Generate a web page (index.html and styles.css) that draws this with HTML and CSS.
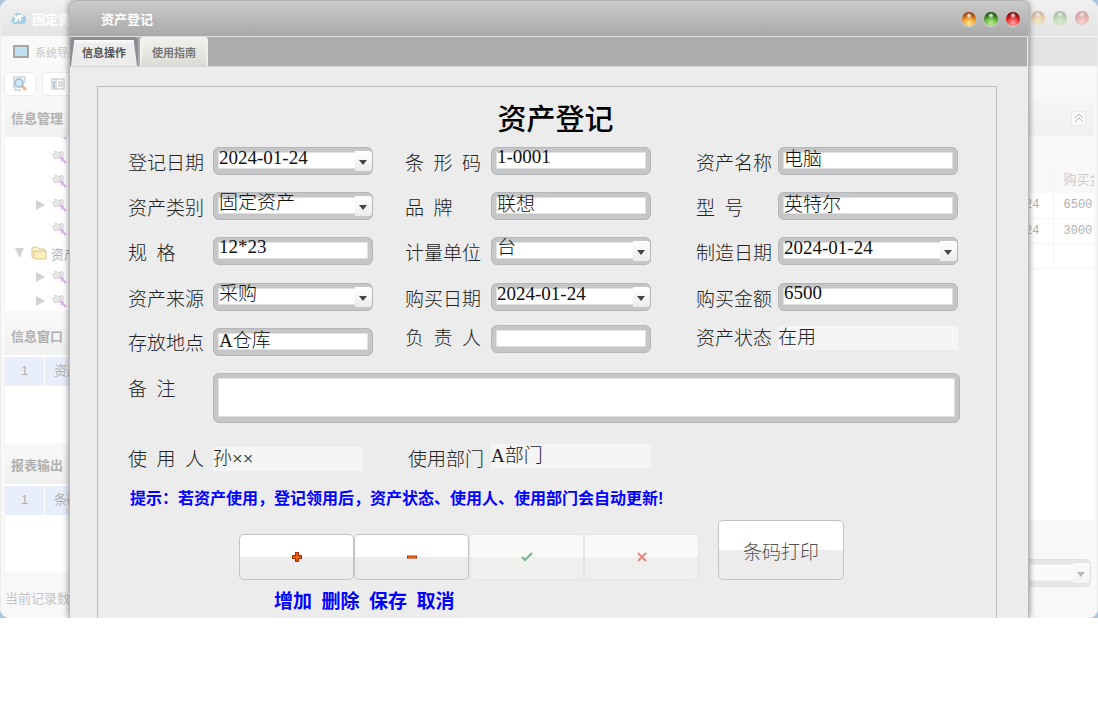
FILE: index.html
```html
<!DOCTYPE html>
<html lang="zh-CN">
<head>
    <meta charset="UTF-8">
    <meta name="viewport" content="width=device-width, initial-scale=1.0">
    <title>资产登记</title>
    <link rel="stylesheet" href="styles.css">
</head>
<body>
    <svg class="symbols" aria-hidden="true">
        <symbol id="tool" viewBox="0 0 16 16">
            <path d="M1 6l3-4 3 2 3-2 2 3-2 3-3-1-2 3-3-1z" fill="#e9e9e9" stroke="#c4c4c4" stroke-dasharray="2 1"/>
            <path d="M5 10l3-4 4 3-3 4" fill="#f4f4f4" stroke="#d0d0d0"/>
            <path d="M8 8l6 6" stroke="#d9b0ee" stroke-width="2"/>
        </symbol>
    </svg>

    <div class="desktop">
        <!-- Main window -->
        <div class="app">
            <header class="app-title">
                <svg width="16" height="14" viewBox="0 0 16 14"><path d="M4 13a4 4 0 0 1-1-7 5 5 0 0 1 9-2 4.500 4.500 0 0 1 1 9z" fill="#a9d0e6"/><path d="M4 4l3 4 2-4M7 8l-2 3M13 5h-3v5" stroke="#fff" stroke-width="2" fill="none"/></svg>
                <span>固定资</span>
                <div class="lights">
                    <i class="light orange"></i><i class="light green"></i><i class="light red"></i>
                </div>
            </header>
            <div class="app-tabs">
                <div class="app-tab">
                    <svg width="16" height="14" viewBox="0 0 16 14"><rect x="1" y="1" width="14" height="11" fill="#bfe0ef" stroke="#a5a5a5" stroke-width="2"/></svg>
                    <span>系统导航</span>
                </div>
            </div>
            <div class="toolbar">
                <button class="tool" aria-label="查找">
                    <svg width="16" height="16" viewBox="0 0 16 16"><path d="M2 1h11v6M2 1v11h2M2 14h7" stroke="#bbb" fill="none"/><circle cx="7" cy="7" r="4" fill="#cdeafa" stroke="#a9c3d6" stroke-width="2"/><path d="M10 10l4 4" stroke="#eab79c" stroke-width="3"/></svg>
                </button>
                <button class="tool" aria-label="列表">
                    <svg width="14" height="12" viewBox="0 0 14 12"><rect x="1" y="1" width="12" height="10" fill="#fff" stroke="#bbb"/><path d="M3 3v7" stroke="#a9cbe6" stroke-width="2"/><path d="M5 1v10" stroke="#bbb"/><path d="M7 4h5M7 6h5M7 8h5" stroke="#bbb"/></svg>
                </button>
            </div>
            <div class="workspace">
                <aside class="sidebar">
                    <h2>信息管理</h2>
                    <div class="tree-box">
                        <ul class="tree">
                            <li class="leaf"><svg width="16" height="16"><use href="#tool"/></svg></li>
                            <li class="leaf"><svg width="16" height="16"><use href="#tool"/></svg></li>
                            <li class="leaf"><svg width="16" height="16"><use href="#tool"/></svg></li>
                            <li class="leaf closed"><svg width="16" height="16"><use href="#tool"/></svg></li>
                            <li class="leaf"><svg width="16" height="16"><use href="#tool"/></svg></li>
                            <li class="folder"><svg width="16" height="14" viewBox="0 0 16 14"><path d="M1 11V3q0-2 2-2h3l2 2h5q1 0 1 2v7H2z" fill="#fff4cc" stroke="#d9c48f"/><path d="M3 5h12v7q0 1-1 1H4q-1 0-1-1z" fill="#fff0bb" stroke="#d9c48f"/></svg>资产</li>
                            <li class="leaf closed"><svg width="16" height="16"><use href="#tool"/></svg></li>
                            <li class="leaf closed"><svg width="16" height="16"><use href="#tool"/></svg></li>
                        </ul>
                    </div>
                    <h2>信息窗口</h2>
                    <div class="list">
                        <div class="list-row"><span>1</span><span>资产</span></div>
                    </div>
                    <h2>报表输出</h2>
                    <div class="list">
                        <div class="list-row"><span>1</span><span>条码</span></div>
                    </div>
                    <p class="status">当前记录数</p>
                </aside>
                <main class="records">
                    <div class="records-head">
                        <button class="collapse" aria-label="收起">
                            <svg width="10" height="10" viewBox="0 0 10 10"><path d="M1 5l4-4 4 4M1 9l4-4 4 4" stroke="#b5b5b5" fill="none"/></svg>
                        </button>
                    </div>
                    <div class="records-body">
                        <table>
                            <thead><tr><th></th><th>购买金额</th></tr></thead>
                            <tbody>
                                <tr><td>2024-01-24</td><td>6500</td></tr>
                                <tr><td>2024-01-24</td><td>3000</td></tr>
                                <tr><td></td><td></td></tr>
                            </tbody>
                        </table>
                    </div>
                    <div class="records-foot">
                        <span class="combo"><select aria-label="筛选"><option></option></select></span>
                    </div>
                </main>
            </div>
        </div>

        <!-- Registration dialog -->
        <div class="dialog" role="dialog" aria-labelledby="dialog-title">
            <header class="dialog-title">
                <span id="dialog-title">资产登记</span>
                <div class="lights">
                    <button class="light orange" aria-label="最小化"></button>
                    <button class="light green" aria-label="最大化"></button>
                    <button class="light red" aria-label="关闭"></button>
                </div>
            </header>
            <nav class="tabs">
                <button class="tab active"><span>信息操作</span></button>
                <button class="tab"><span>使用指南</span></button>
            </nav>
            <form class="panel">
                <h1>资产登记</h1>
                <div class="fields">
                    <label for="reg-date">登记日期</label>
                    <span class="combo"><select id="reg-date"><option>2024-01-24</option></select></span>
                    <label for="barcode">条&ensp;形&ensp;码</label>
                    <input type="text" id="barcode" value="1-0001">
                    <label for="name">资产名称</label>
                    <input type="text" id="name" value="电脑">

                    <label for="category">资产类别</label>
                    <span class="combo"><select id="category"><option>固定资产</option></select></span>
                    <label for="brand">品&ensp;牌</label>
                    <input type="text" id="brand" value="联想">
                    <label for="model">型&ensp;号</label>
                    <input type="text" id="model" value="英特尔">

                    <label for="spec">规&ensp;格</label>
                    <input type="text" id="spec" value="12*23">
                    <label for="unit">计量单位</label>
                    <span class="combo"><select id="unit"><option>台</option></select></span>
                    <label for="made">制造日期</label>
                    <span class="combo"><select id="made"><option>2024-01-24</option></select></span>

                    <label for="source">资产来源</label>
                    <span class="combo"><select id="source"><option>采购</option></select></span>
                    <label for="bought">购买日期</label>
                    <span class="combo"><select id="bought"><option>2024-01-24</option></select></span>
                    <label for="price">购买金额</label>
                    <input type="text" id="price" value="6500">

                    <label for="place" class="low">存放地点</label>
                    <input type="text" id="place" class="low" value="A仓库">
                    <label for="owner" class="flat">负&ensp;责&ensp;人</label>
                    <input type="text" id="owner">
                    <label for="state" class="flat">资产状态</label>
                    <output id="state">在用</output>
                </div>

                <div class="remark">
                    <label for="remark">备&ensp;注</label>
                    <textarea id="remark"></textarea>
                </div>

                <div class="fields usage">
                    <label for="user">使&ensp;用&ensp;人</label>
                    <output id="user">孙××</output>
                    <label for="dept">使用部门</label>
                    <output id="dept">A部门</output>
                </div>

                <p class="tip">提示：若资产使用，登记领用后，资产状态、使用人、使用部门会自动更新!</p>

                <div class="actions">
                    <div class="record-nav">
                        <button type="button" aria-label="增加"><svg width="10" height="10" viewBox="0 0 10 10"><path d="M5 0v10M0 5h10" stroke="#b92a00" stroke-width="4"/><path d="M5 1v8M1 5h8" stroke="#ff8a1c" stroke-width="1"/></svg></button>
                        <button type="button" aria-label="删除"><svg width="10" height="10" viewBox="0 0 10 10"><path d="M0 5h10" stroke="#b92a00" stroke-width="3"/><path d="M1 5h8" stroke="#ff8a1c" stroke-width="1"/></svg></button>
                        <button type="button" aria-label="保存" disabled><svg width="12" height="10" viewBox="0 0 12 10"><path d="M1 5l3 3 7-7" stroke="#78b48c" stroke-width="2" fill="none"/></svg></button>
                        <button type="button" aria-label="取消" disabled><svg width="10" height="10" viewBox="0 0 10 10"><path d="M1 1l8 8M9 1l-8 8" stroke="#e48a80" stroke-width="2"/></svg></button>
                    </div>
                    <button type="button" class="print">条码打印</button>
                </div>
                <p class="captions">增加&ensp;删除&ensp;保存&ensp;取消</p>
            </form>
        </div>
    </div>
</body>
</html>
```
FILE: styles.css
```css
/* General Styles */
* {
    box-sizing: border-box;
}
body {
    margin: 0;
    background: #fff;
    font-family: "Liberation Sans", "Noto Sans CJK SC", sans-serif;
    font-size: 13px;
}
h1, h2, p, ul {
    margin: 0;
    padding: 0;
}
button {
    padding: 0;
    cursor: pointer;
}
svg {
    display: block;
    flex: none;
}
.symbols {
    position: absolute;
    width: 0;
    height: 0;
}
.desktop {
    position: relative;
    overflow: hidden;
    background: #aec3dc;
}

/* Main window */
.app {
    border: 1px solid #ececec;
    border-width: 0 1px 0 1px;
    border-radius: 9px;
    overflow: hidden;
    background: #f8f8f8;
    color: #b0b0b0;
}
.app-title {
    display: flex;
    align-items: center;
    gap: 6px;
    height: 37px;
    padding: 0 8px 0 9px;
    background: linear-gradient(#f0f0f0, #e4e4e4);
    border-bottom: 1px solid #f6f6f6;
    color: #fff;
    font-weight: bold;
}
.app-tabs {
    height: 29px;
    background: #e4e4e4;
}
.app-tab {
    display: flex;
    align-items: center;
    gap: 6px;
    width: 120px;
    height: 29px;
    padding-left: 12px;
    background: #f9f9f7;
    color: #c8c8c8;
    font-size: 11px;
}
.toolbar {
    display: flex;
    gap: 6px;
    height: 34px;
    padding: 6px 3px;
}
.tool {
    display: flex;
    align-items: center;
    justify-content: center;
    width: 32px;
    height: 24px;
    border: 1px solid #ececec;
    border-radius: 5px;
    background: #fff;
}
.workspace {
    display: flex;
}
.sidebar {
    width: 200px;
    padding: 0 4px;
}
.sidebar h2 {
    height: 37px;
    padding-left: 6px;
    background: linear-gradient(#f8f8f8, #f0f0f0);
    font-size: 13px;
    line-height: 37px;
}
.tree-box {
    height: 174px;
    margin-bottom: 7px;
    overflow: hidden;
    background: #fff;
}
.tree {
    margin-top: -16px;
    list-style: none;
}
.tree li {
    display: flex;
    align-items: center;
    gap: 4px;
    height: 24px;
}
.leaf::before,
.folder::before {
    content: "";
    width: 9px;
    height: 10px;
}
.leaf {
    padding-left: 31px;
}
.leaf svg {
    margin-left: 3px;
}
.closed::before {
    background: #d2d2d2;
    clip-path: polygon(0 0, 100% 50%, 0 100%);
}
.folder {
    padding-left: 10px;
}
.folder svg {
    margin-left: 3px;
}
.folder::before {
    background: #d2d2d2;
    clip-path: polygon(0 0, 100% 0, 50% 100%);
}
.list {
    height: 88px;
    margin-bottom: 4px;
    padding-top: 2px;
    background: #fff;
}
.list-row {
    display: flex;
    height: 29px;
    background: #e9effa;
    line-height: 28px;
}
.list-row span:first-child {
    width: 40px;
    border-right: 1px solid #fff;
    text-align: center;
}
.list-row span + span {
    padding-left: 9px;
}
.status {
    height: 42px;
    padding-top: 14px;
    color: #c4c4c4;
    line-height: 18px;
}
.records {
    flex: 1;
    min-width: 0;
    padding-right: 3px;
}
.records-head {
    display: flex;
    align-items: center;
    justify-content: flex-end;
    height: 36px;
    padding-right: 8px;
    background: linear-gradient(#f6f6f6, #f0f0f0);
}
.collapse {
    display: flex;
    align-items: center;
    justify-content: center;
    width: 15px;
    height: 15px;
    border: 1px solid #eaeaea;
    border-radius: 2px;
    background: #fcfcfc;
}
.records-body {
    height: 384px;
    padding-top: 28px;
    background: linear-gradient(#f9f9f9 28px, #fff 28px);
}
.records-body table {
    width: 100%;
    border-collapse: collapse;
    table-layout: fixed;
    font: 12px "Liberation Mono", "Noto Sans CJK SC", monospace;
}
.records-body th {
    height: 29px;
    background: #f8f8f8;
    color: #ccc;
    font-size: 13px;
    font-weight: normal;
}
.records-body td {
    height: 25px;
    padding: 0 13px 0 0;
    border-bottom: 1px solid #f5f5f5;
    text-align: right;
}
.records-body th:last-child,
.records-body td:last-child {
    width: 41px;
    padding: 0 0 0 10px;
    border-left: 1px solid #f5f5f5;
    overflow: hidden;
    white-space: nowrap;
    text-align: left;
}
.records-foot {
    padding: 39px 3px 31px 300px;
    opacity: 0.35;
}

/* Window lights */
.lights {
    display: flex;
    gap: 8px;
    margin-left: auto;
}
.light {
    width: 14px;
    height: 14px;
    border: 0;
    border-radius: 50%;
    box-shadow: 0 1px 1px #ddd;
}
.orange {
    background: radial-gradient(circle at 50% 25%, #fff 0, transparent 25%), radial-gradient(circle at 50% 80%, #ffe78a 0, transparent 55%), linear-gradient(#7a2400, #e8851a 50%, #f5a93a);
}
.green {
    background: radial-gradient(circle at 50% 25%, #fff 0, transparent 25%), radial-gradient(circle at 50% 80%, #c0f096 0, transparent 55%), linear-gradient(#093c00, #4f9f2c 50%, #6cc03c);
}
.red {
    background: radial-gradient(circle at 50% 25%, #fff 0, transparent 25%), radial-gradient(circle at 50% 80%, #ffa8a8 0, transparent 55%), linear-gradient(#650000, #dd1c1c 50%, #f22c2c);
}
.app .light {
    opacity: 0.3;
}

/* Dialog lies over the main window */
.dialog {
    position: absolute;
    top: 0;
    bottom: 0;
    left: 69px;
    right: 69px;
    display: flex;
    flex-direction: column;
    border: 1px solid #b8b8b8;
    border-width: 0 1px;
    border-radius: 8px 8px 0 0;
    background: #ececec;
    box-shadow: 0 0 6px rgba(0, 0, 0, 0.5);
}
.dialog-title {
    display: flex;
    align-items: center;
    height: 37px;
    padding: 0 8px 0 31px;
    border-top: 1px solid #b0b0b0;
    border-bottom: 1px solid #dedede;
    border-radius: 8px 8px 0 0;
    background: linear-gradient(#cacaca, #a9a9a9);
    color: #fff;
    font-weight: bold;
}
.tabs {
    display: flex;
    gap: 2px;
    height: 30px;
    margin-right: 1px;
    border-bottom: 1px solid #d4d4d4;
    background: #adadad;
}
.tab {
    position: relative;
    width: 68px;
    border: 0;
    border-radius: 3px 3px 0 0;
    background: #f0f0ee;
    color: #777;
    font: bold 11px "Noto Sans CJK SC", sans-serif;
}
.tab::before {
    content: "";
    position: absolute;
    inset: 3px 1px 0;
    background: linear-gradient(#efefec, #dcdcd6);
    clip-path: polygon(5% 0, 95% 0, 100% 100%, 0 100%);
}
.tab span {
    position: relative;
}
.tab.active {
    background: #8e8c94;
    color: #555;
}
.tab.active::before {
    background: linear-gradient(#fff, #ececec 4px);
}

/* Registration form */
.panel {
    flex: 1;
    margin: 19px 31px 0 27px;
    border: 1px solid #bdbdbd;
    border-bottom: 0;
    color: #222;
    font-family: "Liberation Serif", "Noto Sans CJK SC", serif;
    font-size: 19px;
    font-weight: 300;
}
h1 {
    height: 60px;
    padding: 11px 0 0 17px;
    color: #000;
    font-size: 29px;
    font-weight: 500;
    line-height: 44px;
    text-align: center;
}
.fields {
    display: grid;
    grid-template-columns: 85px 16fr 118px 16fr 127px 18fr;
    grid-template-rows: 45px 45px 46px 42px 31px;
    align-items: start;
    padding: 0 38px 0 30px;
}
label {
    line-height: 28px;
    padding-top: 3px;
}
.fields label:nth-of-type(3n + 2) {
    padding-left: 32px;
}
.fields label:nth-of-type(3n) {
    padding-left: 45px;
}
.fields .flat {
    padding-top: 0;
}
.fields .low {
    align-self: end;
}
.fields label.low {
    line-height: 24px;
}
input,
select,
textarea {
    display: block;
    width: 100%;
    height: 28px;
    margin: 0;
    padding: 0 5px 8px;
    border: 1px solid #b4b6b8;
    border-radius: 6px;
    outline: 0;
    background: linear-gradient(#fff, #fff) 5px 5px / calc(100% - 10px) calc(100% - 11px) no-repeat, linear-gradient(#dfe0e2, #dfe0e2) 4px 4px / calc(100% - 8px) calc(100% - 9px) no-repeat #c4c6c8;
    color: #111;
    font: inherit;
    line-height: 20px;
    appearance: none;
}
select {
    padding-bottom: 6px;
}
.combo {
    position: relative;
    display: block;
}
.combo::before {
    content: "";
    position: absolute;
    top: 4px;
    right: 1px;
    width: 17px;
    height: 20px;
    border-radius: 0 3px 3px 0;
    background: linear-gradient(#fff, #ececec);
    pointer-events: none;
}
.combo::after {
    content: "";
    position: absolute;
    top: 13px;
    right: 6px;
    width: 8px;
    height: 5px;
    background: #444;
    clip-path: polygon(0 0, 100% 0, 50% 100%);
    pointer-events: none;
}
output {
    height: 24px;
    margin-top: 1px;
    background: #f5f5f5;
    line-height: 23px;
}
.remark {
    display: grid;
    grid-template-columns: 85px 1fr;
    padding: 17px 36px 0 30px;
}
textarea {
    height: 50px;
    resize: none;
}
.usage {
    grid-template-rows: 47px;
    padding-top: 20px;
}
.usage output:first-of-type {
    margin: 4px 10px 0 0;
}
.fields.usage label:last-of-type {
    padding-left: 35px;
}
.tip {
    margin-bottom: 12px;
    padding: 0 32px;
    color: #00f;
    font-family: "Liberation Sans", "Noto Sans CJK SC", sans-serif;
    font-size: 16px;
    font-weight: bold;
    line-height: 18px;
}
.actions {
    display: flex;
    align-items: flex-end;
    gap: 19px;
    padding-left: 141px;
}
.record-nav {
    display: flex;
}
.record-nav button,
.print {
    display: flex;
    align-items: center;
    justify-content: center;
    width: 115px;
    height: 46px;
    border: 1px solid #c4c4c4;
    border-radius: 5px;
    background: linear-gradient(#fff 50%, #ececec 50%);
}
.record-nav button:disabled {
    border-color: #e4e4e2;
    background: linear-gradient(#f9f9f7 50%, #efefed 50%);
}
.actions .print {
    width: 126px;
    height: 60px;
    color: #555;
    font: inherit;
}
.captions {
    padding: 8px 0 0 176px;
    color: #00f;
    font-weight: bold;
    line-height: 28px;
}
```
